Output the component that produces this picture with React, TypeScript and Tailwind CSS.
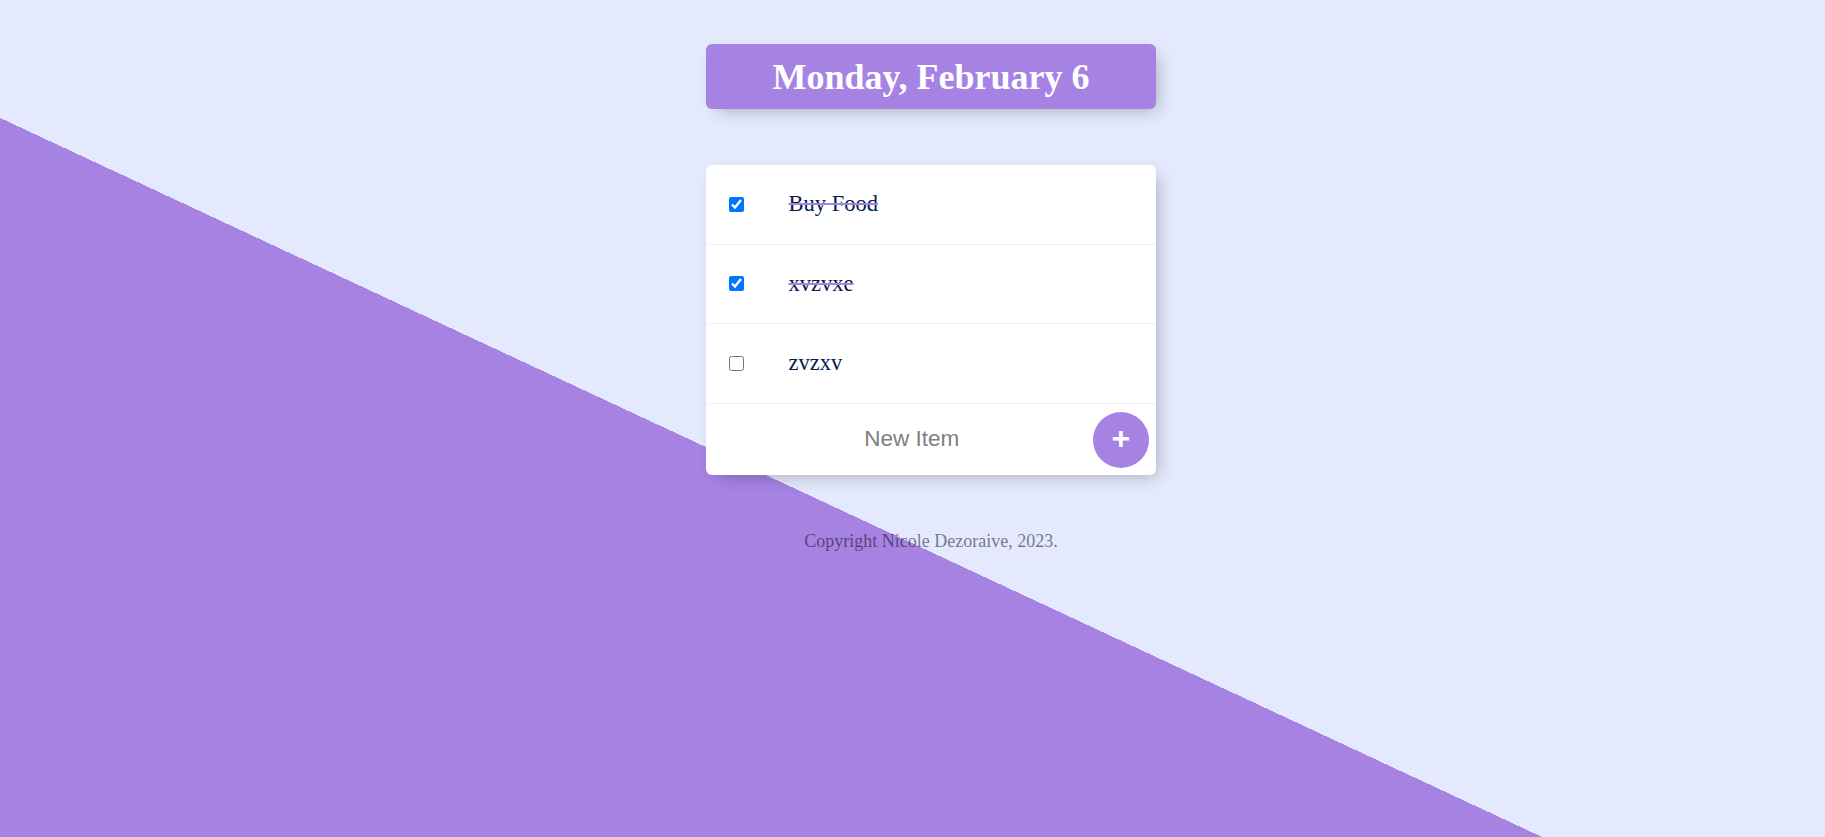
import React, { useState } from 'react';

type Item = { id: number; name: string; done: boolean };

const initialItems: Item[] = [
  { id: 1, name: 'Buy Food', done: true },
  { id: 2, name: 'xvzvxe', done: true },
  { id: 3, name: 'zvzxv', done: false },
];

const App = () => {
  const [items, setItems] = useState<Item[]>(initialItems);
  const [text, setText] = useState('');

  const toggle = (id: number) => {
    setItems((prev) => prev.map((it) => (it.id === id ? { ...it, done: !it.done } : it)));
  };

  const addItem = (e: React.FormEvent) => {
    e.preventDefault();
    if (!text.trim()) return;
    setItems((prev) => [...prev, { id: Date.now(), name: text, done: false }]);
    setText('');
  };

  return (
    <div className="min-h-screen w-full bg-[#e4e9fd] bg-[linear-gradient(25deg,#a683e3_42.6%,#e4e9fd_42.6%)] font-['Liberation_Serif',serif]">
      <div className="flex flex-col items-center pt-[44px] pl-[37px]">
        {/* 날짜 헤더 */}
        <div className="w-[450px] h-[65px] flex items-center justify-center rounded-[6px] bg-[#a683e3] shadow-[6px_6px_17px_-6px_rgba(0,0,0,0.3)]">
          <h1 className="text-[36px] font-bold text-white leading-[normal]">Monday, February 6</h1>
        </div>

        {/* 할 일 목록 */}
        <div className="w-[450px] mt-[56px] rounded-[6px] bg-white shadow-[6px_6px_17px_-6px_rgba(0,0,0,0.3)]">
          {items.map((item) => (
            <div key={item.id} className="flex items-center min-h-[79.5px] border-b border-[#f1f1f1]">
              <input
                type="checkbox"
                checked={item.done}
                onChange={() => toggle(item.id)}
                className="w-[15px] h-[15px] m-[22.5px] shrink-0"
              />
              <p
                className={
                  item.done
                    ? 'p-[22.5px] text-[22.5px] leading-[normal] text-[#00204a] line-through decoration-[#a683e3] decoration-[1.5px]'
                    : 'p-[22.5px] text-[22.5px] leading-[normal] text-[#00204a]'
                }
              >
                {item.name}
              </p>
            </div>
          ))}
          <form onSubmit={addItem} className="flex items-center justify-center gap-[5px] h-[71px] ml-[22.5px]">
            <input
              type="text"
              value={text}
              onChange={(e) => setText(e.target.value)}
              placeholder="New Item"
              autoComplete="off"
              className="w-[352px] h-[67.5px] text-center bg-transparent border-none outline-none text-[22.5px] font-['Liberation_Sans',Arial,sans-serif] placeholder:text-[#808080] focus:shadow-[inset_0_-3px_0_0_#a683e3]"
            />
            <button
              type="submit"
              className="w-[56px] h-[56px] rounded-full bg-[#a683e3] text-white text-[32px] font-bold leading-none pb-[5px] flex items-center justify-center font-['Liberation_Sans',Arial,sans-serif] mt-[2px]"
            >
              +
            </button>
          </form>
        </div>

        <footer className="mt-[56px] text-[18px] leading-[normal] text-black/50 text-center">
          Copyright Nicole Dezoraive, 2023.
        </footer>
      </div>
    </div>
  );
};

export default App;
